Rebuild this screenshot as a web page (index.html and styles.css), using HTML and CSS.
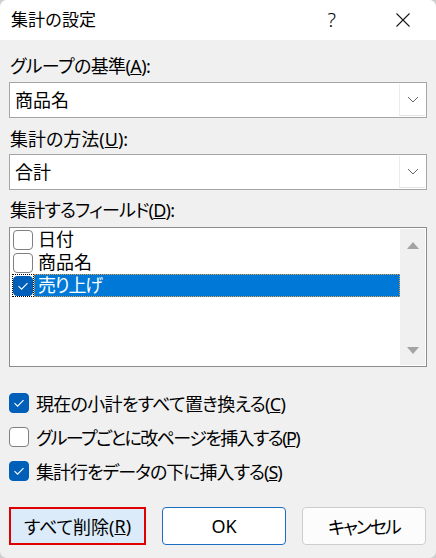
FILE: index.html
```html
<!DOCTYPE html>
<html lang="ja">
<head>
<meta charset="utf-8">
<link rel="stylesheet" href="styles.css">
</head>
<body>
<div class="window">
  <div class="titlebar">
    <span class="title">集計の設定</span>
    <span class="help">?</span>
    <svg class="close" width="16" height="16" viewBox="0 0 16 16"><path d="M1.5 1.5 L14.5 14.5 M14.5 1.5 L1.5 14.5" stroke="#1a1a1a" stroke-width="1.1" fill="none"/></svg>
  </div>
  <div class="content">
    <div class="label l1">グループの基準(<u>A</u>):</div>
    <div class="combo c1">
      <span class="combo-text">商品名</span>
      <span class="drop"><svg width="12" height="7" viewBox="0 0 12 7"><path d="M1 1 L6 6 L11 1" stroke="#666" stroke-width="1" fill="none"/></svg></span>
    </div>
    <div class="label l2">集計の方法(<u>U</u>):</div>
    <div class="combo c2">
      <span class="combo-text">合計</span>
      <span class="drop"><svg width="12" height="7" viewBox="0 0 12 7"><path d="M1 1 L6 6 L11 1" stroke="#666" stroke-width="1" fill="none"/></svg></span>
    </div>
    <div class="label l3">集計するフィールド(<u>D</u>):</div>
    <div class="listbox">
      <div class="items">
        <div class="item"><span class="box"></span><span class="itext">日付</span></div>
        <div class="item"><span class="box"></span><span class="itext">商品名</span></div>
        <div class="item sel"><span class="focusbox"><span class="box checked"><svg width="20" height="20" viewBox="0 0 20 20"><path d="M5.5 10.2 L8.6 13.2 L14.5 7.2" stroke="#fff" stroke-width="1.1" fill="none"/></svg></span></span><span class="itext hl">売り上げ</span></div>
      </div>
      <div class="scrollbar">
        <svg width="12" height="8" viewBox="0 0 12 8"><path d="M0 8 L6 1 L12 8 Z" fill="#a3a3a3"/></svg>
        <svg width="12" height="8" viewBox="0 0 12 8"><path d="M0 0 L6 7 L12 0 Z" fill="#a3a3a3"/></svg>
      </div>
    </div>
    <div class="checks">
      <div class="crow"><span class="box checked"><svg width="20" height="20" viewBox="0 0 20 20"><path d="M5.5 10.2 L8.6 13.2 L14.5 7.2" stroke="#fff" stroke-width="1.1" fill="none"/></svg></span><span class="ct1">現在の小計をすべて置き換える(<u>C</u>)</span></div>
      <div class="crow"><span class="box"></span><span class="ct2">グループごとに改ページを挿入する(<u>P</u>)</span></div>
      <div class="crow"><span class="box checked"><svg width="20" height="20" viewBox="0 0 20 20"><path d="M5.5 10.2 L8.6 13.2 L14.5 7.2" stroke="#fff" stroke-width="1.1" fill="none"/></svg></span><span class="ct3">集計行をデータの下に挿入する(<u>S</u>)</span></div>
    </div>
    <div class="buttons">
      <div class="btn btn-remove">すべて削除(<u>R</u>)</div>
      <div class="btn btn-ok">OK</div>
      <div class="btn btn-cancel">キャンセル</div>
    </div>
  </div>
</div>
</body>
</html>
```
FILE: styles.css
```css
html, body {
  margin: 0;
  padding: 0;
  background: #cfcfcf;
}
body {
  font-family: "Noto Sans", "Noto Sans CJK JP", sans-serif;
  font-size: 18px;
  color: #000;
  font-feature-settings: "palt";
}
.window {
  width: 436px;
  height: 558px;
  background: #f0f0f0;
  border-radius: 7px;
  overflow: hidden;
  display: flex;
  flex-direction: column;
}
.titlebar {
  height: 40px;
  background: #fff;
  display: flex;
  align-items: center;
  padding-left: 11px;
}
.title {
  flex: 1;
  font-size: 17px;
  line-height: 40px;
  font-feature-settings: normal;
}
.help {
  font-family: "Noto Sans", sans-serif;
  font-weight: 300;
  font-size: 20px;
  margin-right: 59px;
  line-height: 40px;
}
.close {
  margin-right: 25px;
}
.content {
  padding: 14px 9px 0 9px;
  display: flex;
  flex-direction: column;
}
.label {
  height: 24px;
  line-height: 24px;
  padding-left: 1px;
  white-space: nowrap;
}
.l1 { letter-spacing: -0.6px; }
.l2 { margin-top: 9px; }
.l3 { margin-top: 8px; letter-spacing: -0.8px; }
.combo {
  height: 34px;
  border: 1px solid #a6a6a6;
  background: #fff;
  display: flex;
  align-items: stretch;
}
.c1 { margin-top: 4px; }
.c2 { margin-top: 3px; }
.combo-text {
  flex: 1;
  padding-left: 5px;
  line-height: 34px;
}
.drop {
  width: 25px;
  margin: 1px 1px 1px 0;
  border-left: 1px solid #ececec;
  border-bottom: 1px solid #e4e4e4;
  display: flex;
  align-items: center;
  justify-content: center;
}
.listbox {
  margin-top: 5px;
  height: 138px;
  border: 1px solid #8b8b90;
  background: #fff;
  display: flex;
}
.items {
  flex: 1;
  padding-left: 2px;
  display: flex;
  flex-direction: column;
}
.item {
  height: 23px;
  display: flex;
  align-items: center;
}
.box {
  width: 18px;
  height: 18px;
  border: 1px solid #7f7f7f;
  border-radius: 4px;
  background: #fff;
  flex: none;
  display: flex;
  align-items: center;
  justify-content: center;
}
.item > .box {
  margin-left: 1px;
  margin-right: 3px;
}
.box.checked {
  background: #005fb8;
  border-color: #005fb8;
}
.box svg { flex: none; margin: -1px; }
.focusbox {
  height: 21px;
  width: 20px;
  border: 1px dotted #000;
  display: flex;
  align-items: center;
  justify-content: center;
  flex: none;
}
.itext {
  line-height: 23px;
  padding-left: 2px;
}
.itext.hl {
  flex: 1;
  height: 21px;
  line-height: 21px;
  background: #0078d7;
  color: #fff;
  border: 1px dotted #e8a040;
  padding-left: 3px;
  letter-spacing: -1.3px;
}
.scrollbar {
  width: 25px;
  margin: 1px 1px 1px 0;
  background: #f0f0f0;
  display: flex;
  flex-direction: column;
  justify-content: space-between;
  align-items: center;
  padding: 12px 0 10px 0;
}
.checks {
  margin-top: 19px;
  display: flex;
  flex-direction: column;
}
.crow {
  height: 34px;
  display: flex;
  align-items: center;
  gap: 7px;
  white-space: nowrap;
}
.ct1 { letter-spacing: -0.7px; }
.ct2 { letter-spacing: -1.6px; }
.ct3 { letter-spacing: -1px; }
.buttons {
  margin-top: 19px;
  display: flex;
  gap: 16px;
}
.btn {
  height: 36px;
  border-radius: 4px;
  display: flex;
  align-items: center;
  justify-content: center;
  box-sizing: content-box;
}
.btn-remove {
  width: 133px;
  height: 34px;
  border: 2px solid #e00000;
  border-radius: 0;
  background: #dbebfa;
}
.btn-ok {
  width: 122px;
  border: 1px solid #1a6fc0;
  background: #fff;
}
.btn-cancel {
  width: 122px;
  border: 1px solid #cdcdcd;
  background: #fcfcfc;
  letter-spacing: -2px;
}
```
